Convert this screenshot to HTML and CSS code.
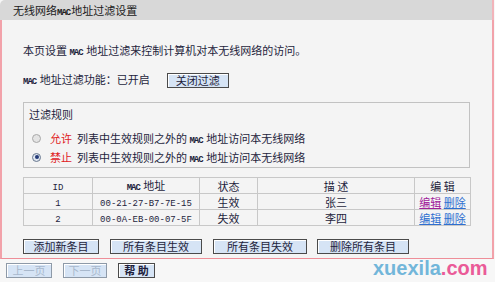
FILE: index.html
```html
<!DOCTYPE html>
<html>
<head>
<meta charset="utf-8">
<link rel="stylesheet" href="styles.css">
</head>
<body>
<div class="page">
  <div class="title">无线网络<span class="en sm">MAC</span>地址过滤设置</div>
  <div class="main">
    <p class="desc">本页设置 <span class="en sm">MAC</span> 地址过滤来控制计算机对本无线网络的访问。</p>
    <div class="status">
      <span><span class="en sm">MAC</span> 地址过滤功能：已开启</span>
      <button class="btn close-btn">关闭过滤</button>
    </div>
    <div class="rules">
      <div class="rules-title">过滤规则</div>
      <div class="radio-row"><span class="radio"></span><span class="red">允许</span><span>列表中生效规则之外的 <span class="en sm">MAC</span> 地址访问本无线网络</span></div>
      <div class="radio-row"><span class="radio on"></span><span class="red">禁止</span><span>列表中生效规则之外的 <span class="en sm">MAC</span> 地址访问本无线网络</span></div>
    </div>
    <table class="list">
      <colgroup>
        <col class="c1"><col class="c2"><col class="c3"><col class="c4"><col class="c5">
      </colgroup>
      <tr><td><span class="en">ID</span></td><td><span class="en sm">MAC</span> 地址</td><td>状态</td><td>描 述</td><td>编 辑</td></tr>
      <tr><td><span class="en">1</span></td><td><span class="en">00-21-27-B7-7E-15</span></td><td>生效</td><td>张三</td><td><a class="visited">编辑</a> <a>删除</a></td></tr>
      <tr><td><span class="en">2</span></td><td><span class="en">00-0A-EB-00-07-5F</span></td><td>失效</td><td>李四</td><td><a>编辑</a> <a>删除</a></td></tr>
    </table>
    <div class="actions">
      <button class="btn w1">添加新条目</button>
      <button class="btn w2">所有条目生效</button>
      <button class="btn w3">所有条目失效</button>
      <button class="btn w2">删除所有条目</button>
    </div>
  </div>
  <div class="footer">
    <button class="btn dis f1">上一页</button>
    <button class="btn dis f2">下一页</button>
    <button class="btn f3">帮 助</button>
  </div>
  <div class="mark"><span class="mk1">xuexila</span><span class="mk2">.com</span></div>
</div>
</body>
</html>
```

FILE: styles.css
```css
* { box-sizing: border-box; }
html, body { margin: 0; padding: 0; background: #f7f7f7; }
.page {
  position: relative;
  width: 495px;
  height: 282px;
  overflow: hidden;
  font-family: "Noto Sans CJK SC", sans-serif;
  font-size: 11px;
  color: #1e1e3c;
  background: #f7f7f7;
}
.en { font-family: "Liberation Mono", monospace; font-size: 9px; line-height: 10px; }
.en.sm { font-size: 9px; font-weight: bold; letter-spacing: -1px; margin-right: 1px; }
.title {
  width: 494px;
  height: 20px;
  line-height: 21px;
  padding-left: 13px;
  background: #d8d8d8;
  border-top-left-radius: 5px;
  border-right: 2px solid #f2b4ba;
  color: #202020;
}
.main {
  width: 494px;
  height: 239px;
  overflow: hidden;
  background: #f4f4f4;
  border-left: 2px solid #f2a2aa;
  border-right: 2px solid #f2a2aa;
  border-bottom: 1px solid #ee8e98;
  padding: 22px 0 0 21px;
}
.desc { margin: 0; height: 16px; line-height: 16px; }
.status {
  display: flex;
  align-items: center;
  height: 15px;
  margin-top: 14px;
  line-height: 15px;
}
.btn {
  font-family: "Noto Sans CJK SC", sans-serif;
  font-size: 11px;
  color: #1e1e3c;
  height: 15px;
  line-height: 13px;
  padding: 0;
  margin: 0;
  background: #d6e4f5;
  border: 1px solid #4a4a4a;
  box-shadow: inset 1px 1px #ffffff;
  border-radius: 0;
}
.close-btn { width: 62px; margin-left: 17px; margin-top: 1px; }
.rules {
  width: 447px;
  height: 66px;
  margin-top: 15px;
  border: 1px solid #c2c2c2;
  padding: 3px 0 0 5px;
}
.rules-title { height: 16px; line-height: 16px; }
.radio-row {
  display: flex;
  align-items: center;
  height: 16px;
  line-height: 16px;
  margin-top: 8px;
  padding-left: 3px;
}
.radio-row + .radio-row { margin-top: 3px; }
.radio {
  width: 9px;
  height: 9px;
  border-radius: 50%;
  border: 1px solid #a9a9a9;
  background: #e4e4e4;
  margin-right: 9px;
  position: relative;
}
.radio.on { border-color: #6b7a90; background: #dfe6f0; }
.radio.on::after {
  content: "";
  position: absolute;
  left: 1.5px; top: 1.5px;
  width: 4px; height: 4px;
  border-radius: 50%;
  background: #243a78;
}
.red { color: #e0201c; margin-right: 5px; }
.list {
  width: 447px;
  margin-top: 9px;
  border-collapse: collapse;
  table-layout: fixed;
  border: 1px solid #b8b8b8;
}
.c1 { width: 69px; } .c2 { width: 107px; } .c3 { width: 58px; } .c4 { width: 157px; } .c5 { width: 56px; }
.list tr { height: 16px; }
.list td {
  padding: 0;
  line-height: 14px;
  text-align: center;
  border: 1px solid #c8c8c8;
}
.list a { color: #2f6fd0; text-decoration: underline; }
.list a.visited { color: #a0209a; }
.actions {
  display: flex;
  gap: 11px;
  margin-top: 13px;
}
.w1 { width: 76px; } .w2 { width: 92px; } .w3 { width: 94px; }
.actions .w3 + .w2 { margin-left: -1px; }
.footer {
  display: flex;
  gap: 11px;
  padding: 4px 0 0 6px;
}
.f1 { width: 46px; } .f2 { width: 44px; } .f3 { width: 37px; font-weight: bold; }
.btn.dis { color: #a8b8cc; border-color: #8e9aa8; }
.mark {
  position: absolute;
  left: 373px;
  top: 256px;
  font-family: "Liberation Sans", sans-serif;
  font-size: 20px;
  font-weight: bold;
  line-height: 24px;
}
.mk1 { color: #72b6da; }
.mk2 { color: #ea5b98; }
```
